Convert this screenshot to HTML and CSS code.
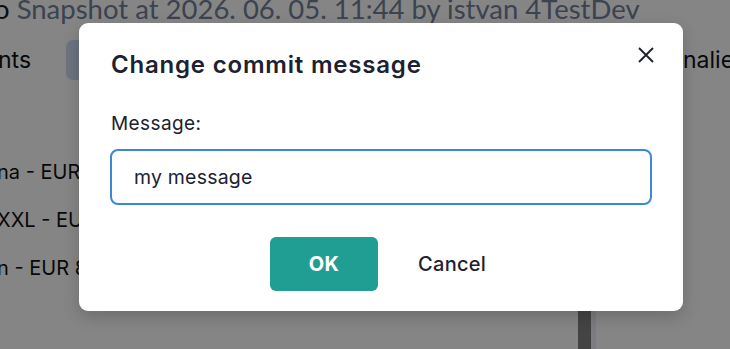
FILE: index.html
```html
<!DOCTYPE html>
<html>
<head>
<meta charset="utf-8">
<link rel="stylesheet" href="styles.css">
</head>
<body>
<div class="page">
  <div class="crumb"><span class="crumb-dark">o</span> Snapshot at 2026. 06. 05. 11:44 by istvan 4TestDev</div>
  <div class="tabs">
    <span class="tab-text">nts</span>
    <span class="tab-btn"></span>
    <span class="tab-spacer"></span>
    <span class="tab-text right">nalies</span>
  </div>
  <div class="rows">
    <div class="row">na - EUR</div>
    <div class="row">XXL - EU</div>
    <div class="row">n - EUR 8</div>
  </div>
  <div class="scroll">
    <span class="scroll-thumb"></span>
    <span class="scroll-line"></span>
  </div>
</div>

<div class="overlay">
  <div class="dialog">
    <div class="dialog-head">
      <h2 class="dialog-title">Change commit message</h2>
      <button class="close" aria-label="Close">
        <svg width="16" height="16" viewBox="0 0 16 16"><path d="M1 1 L15 15 M15 1 L1 15" stroke="#1c2230" stroke-width="1.9" stroke-linecap="butt" fill="none"/></svg>
      </button>
    </div>
    <label class="label">Message:</label>
    <div class="input">my message</div>
    <div class="actions">
      <button class="btn-ok">OK</button>
      <button class="btn-cancel">Cancel</button>
    </div>
  </div>
</div>
</body>
</html>
```
FILE: styles.css
```css
* { box-sizing: border-box; }
html, body { margin: 0; padding: 0; }
body {
  width: 730px;
  height: 349px;
  overflow: hidden;
  background: #ffffff;
  font-family: Inter, "Noto Sans", sans-serif;
  position: relative;
}
.page {
  height: 349px;
  overflow: hidden;
}
.crumb {
  font-family: Lato, "Open Sans", sans-serif;
  font-size: 27.5px;
  line-height: 30px;
  margin-top: -6px;
  margin-left: -6px;
  white-space: nowrap;
  color: #73809a;
}
.crumb-dark { color: #1a1a1a; }
.tabs {
  display: flex;
  align-items: center;
  height: 40px;
  margin-top: 16px;
}
.tab-text {
  font-size: 23px;
  color: #111;
  white-space: nowrap;
}
.tab-text:first-child { margin-left: -2px; }
.tab-btn {
  width: 40px;
  height: 40px;
  margin-left: 35px;
  border-radius: 7px;
  background: #d1ddf3;
}
.tab-spacer { flex: 1; }
.tab-text.right { margin-right: -30px; width: 77px; }
.rows {
  margin-top: 79px;
  display: flex;
  flex-direction: column;
  gap: 22px;
}
.row {
  font-size: 20px;
  line-height: 26px;
  color: #111;
  margin-left: -3px;
  white-space: nowrap;
}
.scroll {
  display: flex;
  margin-left: 578px;
  height: 140px;
}
.scroll-thumb { width: 13px; background: #838383; height: 100%; }
.scroll-line { width: 5px; background: #eceef6; height: 100%; }

.overlay {
  position: absolute;
  inset: 0;
  background: rgba(0, 0, 0, 0.478);
  padding: 23px 0 0 79px;
}
.dialog {
  width: 604px;
  height: 288px;
  background: #ffffff;
  border-radius: 9px;
  box-shadow: 0 6px 16px rgba(0, 0, 0, 0.18);
  padding: 0 31px 0 31px;
  display: flex;
  flex-direction: column;
}
.dialog > * { flex-shrink: 0; }
.dialog-head {
  display: flex;
  justify-content: space-between;
  align-items: flex-start;
  padding-top: 26px;
}
.dialog-title {
  margin: 0 0 0 1px;
  font-size: 24px;
  line-height: 32px;
  font-weight: 600;
  color: #1c2230;
  letter-spacing: 0.8px;
}
.close {
  border: 0;
  background: none;
  padding: 0;
  margin-top: -2px;
  margin-right: -2px;
  width: 16px;
  height: 16px;
  display: flex;
}
.label {
  margin-top: 31px;
  margin-left: 1px;
  font-size: 19px;
  line-height: 24px;
  color: #1c2230;
  letter-spacing: 0.4px;
}
.input {
  margin-top: 13px;
  width: 542px;
  height: 56px;
  border: 2px solid #3b88d6;
  border-radius: 8px;
  padding: 0 22px;
  display: flex;
  align-items: center;
  font-size: 19.5px;
  color: #1c2230;
  letter-spacing: 0.2px;
}
.actions {
  display: flex;
  align-items: center;
  margin-top: 32px;
  padding-left: 160px;
}
.btn-ok {
  width: 108px;
  height: 54px;
  border: 0;
  border-radius: 6px;
  background: #219e94;
  color: #ffffff;
  font-family: Inter, sans-serif;
  font-size: 20px;
  font-weight: 700;
  letter-spacing: 0.3px;
}
.btn-cancel {
  border: 0;
  background: none;
  margin-left: 40px;
  padding: 0;
  font-family: Inter, sans-serif;
  font-size: 20px;
  font-weight: 500;
  color: #1c2230;
  letter-spacing: 0.3px;
}
```
